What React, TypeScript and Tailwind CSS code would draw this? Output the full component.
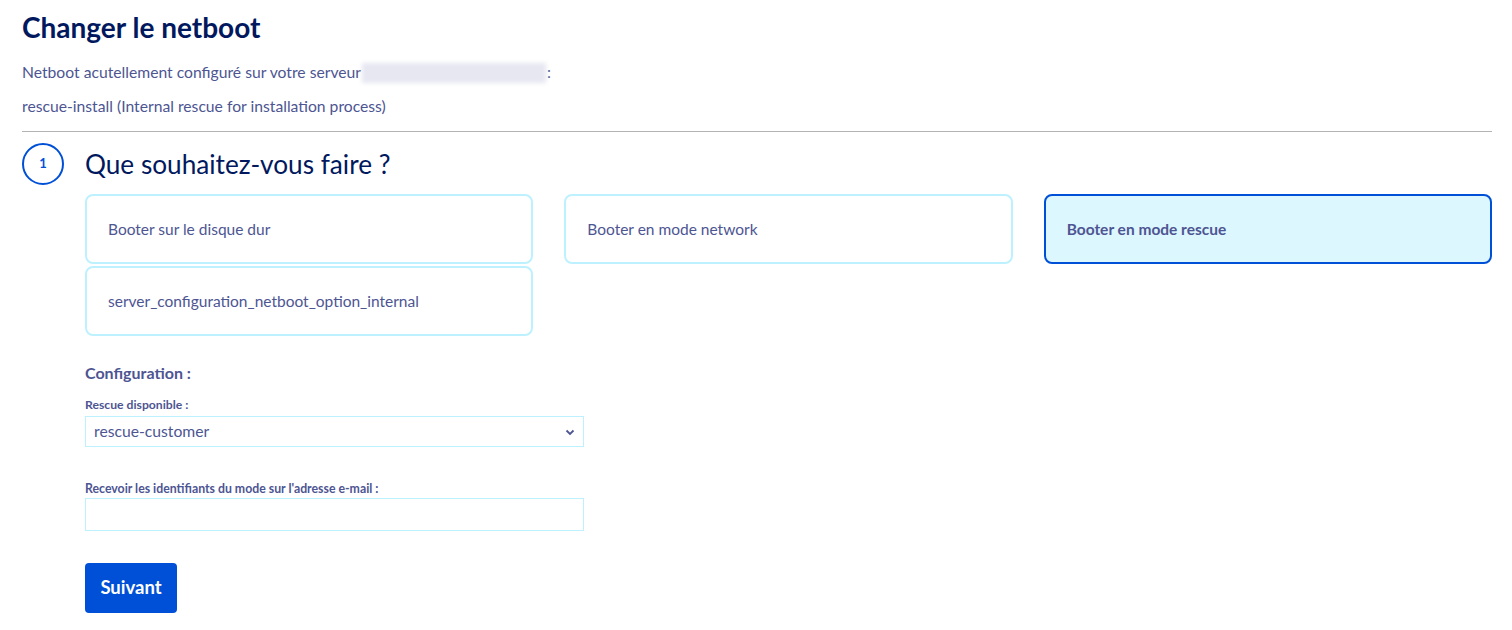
import React from "react";

const font = { fontFamily: "Lato, 'Open Sans', sans-serif" };

function Tile({ label, selected }: { label: string; selected?: boolean }) {
  return (
    <div
      className={
        "h-[70px] flex items-center px-[21px] rounded-[8px] border-2 text-[15.5px] " +
        (selected
          ? "border-[#0050d7] bg-[#ddf7ff] font-bold text-[#4d5592]"
          : "border-[#bef1ff] bg-white text-[#4d5592]")
      }
    >
      <span className="translate-y-[1px]">{label}</span>
    </div>
  );
}

export default function App() {
  return (
    <div className="bg-white min-h-[630px] pl-[22px] pr-[20px] pt-[12px] text-[#4d5592]" style={font}>
      <h1 className="text-[28px] font-bold text-[#00185e] leading-[30px]">Changer le netboot</h1>
      <div className="mt-[20px] flex items-center text-[15.7px] h-[22px]">
        <span>Netboot acutellement configuré sur votre serveur</span>
        <span className="inline-block w-[184px] h-[20px] bg-[#e6e7f1] blur-[2px] mx-[1px]" />
        <span>:</span>
      </div>
      <div className="mt-[12px] text-[15.7px] h-[22px] flex items-center">
        rescue-install (Internal rescue for installation process)
      </div>
      <div className="mt-[13px] h-px bg-[#b3b3b3]" />
      <div className="flex items-center mt-[11px]">
        <div className="w-[42px] h-[42px] rounded-full border-2 border-[#0050d7] flex items-center justify-center text-[#0050d7] text-[13px] font-bold">
          1
        </div>
        <div className="ml-[21px] text-[26.2px] text-[#00185e] leading-[34px]">Que souhaitez-vous faire ?</div>
      </div>
      <div className="pl-[63px] mt-[9px]">
        <div className="grid grid-cols-3 gap-x-[31px] gap-y-[2px]">
          <Tile label="Booter sur le disque dur" />
          <Tile label="Booter en mode network" />
          <Tile label="Booter en mode rescue" selected />
          <Tile label="server_configuration_netboot_option_internal" />
        </div>
        <div className="mt-[27px] text-[16px] font-bold leading-[20px]">Configuration :</div>
        <div className="mt-[15px] text-[12.2px] font-bold leading-[14px]">Rescue disponible :</div>
        <div className="mt-[4px] w-[499px] h-[31px] border border-[#bef1ff] flex items-center justify-between px-[8px] text-[15.7px]">
          <span>rescue-customer</span>
          <svg width="12" height="12" viewBox="0 0 12 12" className="mr-[-1px]">
            <path d="M2.5 4.5 L6 8 L9.5 4.5" fill="none" stroke="#4d5592" strokeWidth="1.8" />
          </svg>
        </div>
        <div className="mt-[35px] text-[12.3px] font-bold leading-[14px]">
          Recevoir les identifiants du mode sur l'adresse e-mail :
        </div>
        <div className="mt-[2px] w-[499px] h-[33px] border border-[#bef1ff]" />
        <button className="mt-[32px] w-[92px] h-[50px] rounded-[4px] bg-[#0050d7] text-white text-[18.5px] font-bold">
          Suivant
        </button>
      </div>
    </div>
  );
}
